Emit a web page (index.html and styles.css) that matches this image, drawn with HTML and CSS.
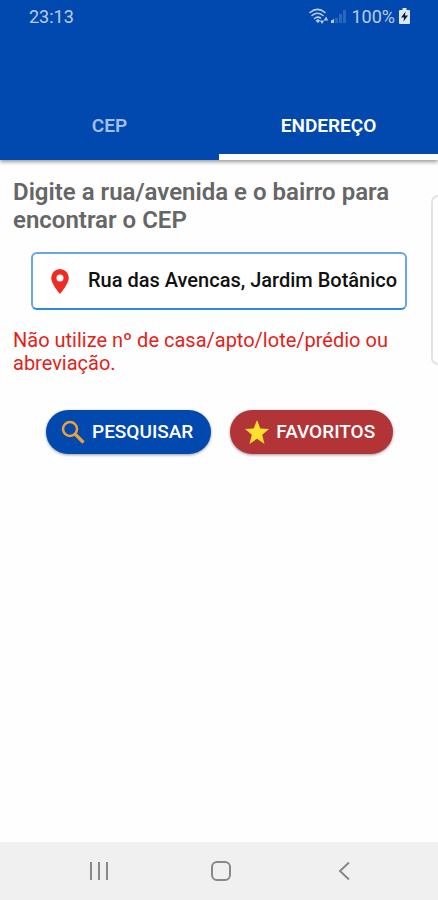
FILE: index.html
```html
<!DOCTYPE html>
<html lang="pt-BR">
<head>
<meta charset="utf-8">
<meta name="viewport" content="width=device-width, initial-scale=1">
<title>Buscar CEP</title>
<link rel="stylesheet" href="styles.css">
</head>
<body>
<header class="app-bar">
  <div class="status">
    <span>23:13</span>
    <span class="status-right">
      <svg class="wifi" viewBox="0 0 20 16" aria-hidden="true">
        <g fill="none" stroke="currentColor" stroke-width="1.6" stroke-linecap="round">
          <path d="M1 4.500Q8.500-1.800 16 4.500"/><path d="M3 7.500Q8.500 3 14 7.500"/><path d="M5.500 10.500Q8.500 8 11.500 10"/>
        </g>
        <path d="M6.500 12.700L9 11L11.200 12.700L9 15Z M10.800 12.500h4.400l-2.200 3.500z M14.800 12.500l2.200-4l2.200 4z" fill="currentColor"/>
      </svg>
      <svg class="signal" viewBox="0 0 15 14" aria-hidden="true">
        <path d="M0 11.500L3 10v4H0z" fill="#b9cdec"/>
        <path d="M4 9h3v5H4zM8 5h3v9H8zM12 1h3v13h-3z" fill="#2a66bb"/>
      </svg>
      <span class="percent">100%</span>
      <svg class="battery" viewBox="0 0 11 16" aria-hidden="true">
        <path d="M3.500 0h4v2H10a1 1 0 0 1 1 1v12a1 1 0 0 1-1 1H1a1 1 0 0 1-1-1V3a1 1 0 0 1 1-1h2.500z" fill="#dce7f6"/>
        <path d="M6.500 3.500L2 9.500h3L4.500 13.500L9 7.500H6z" fill="#0c2038"/>
      </svg>
    </span>
  </div>
  <nav class="tabs">
    <a class="tab" href="#cep">CEP</a>
    <a class="tab active" href="#endereco" aria-current="page">ENDEREÇO</a>
  </nav>
</header>
<main class="pager">
  <form class="search">
    <label class="title" for="address">Digite a rua/avenida e o bairro para encontrar o CEP</label>
    <div class="field">
      <svg class="pin" viewBox="0 0 18 25" aria-hidden="true">
        <path fill-rule="evenodd" d="M9 0a8.800 8.800 0 0 0-8.800 8.800C.2 15 9 25 9 25s8.800-10 8.800-16.200A8.800 8.800 0 0 0 9 0zm0 5.500a3.500 3.500 0 1 1 0 7 3.500 3.500 0 0 1 0-7z" fill="#ee2c24"/>
      </svg>
      <input id="address" type="text" value="Rua das Avencas, Jardim Botânico">
    </div>
    <p class="hint">Não utilize nº de casa/apto/lote/prédio ou abreviação.</p>
    <div class="actions">
      <button class="btn primary" type="submit">
        <svg viewBox="0 0 24 24" aria-hidden="true"><g fill="none" stroke="#e9a13b"><circle cx="9" cy="9" r="7" stroke-width="2.500"/><path d="M14 14L22.500 22.500" stroke-width="3.200"/></g></svg>
        PESQUISAR
      </button>
      <button class="btn danger" type="button">
        <svg viewBox="0 0 24 24" aria-hidden="true"><path d="M12 0l3.300 8.500 8.700.5-6.800 5.700L19.500 24 12 18.700 4.500 24l2.300-9.300L0 9l8.700-.5z" fill="#ffe02f"/></svg>
        FAVORITOS
      </button>
    </div>
  </form>
  <div class="next-page"></div>
</main>
<footer class="nav-bar">
  <button type="button" aria-label="Recentes"><svg viewBox="0 0 20 20" aria-hidden="true"><path d="M2 1v18M10 1v18M18 1v18"/></svg></button>
  <button type="button" aria-label="Início"><svg viewBox="0 0 20 20" aria-hidden="true"><rect x="1" y="1" width="18" height="18" rx="5"/></svg></button>
  <button type="button" aria-label="Voltar"><svg viewBox="0 0 20 20" aria-hidden="true"><path d="M15 1.500L6 10l9 8.500"/></svg></button>
</footer>
</body>
</html>
```
FILE: styles.css
```css
* { box-sizing: border-box; }

body {
  margin: 0;
  min-height: 100vh;
  display: flex;
  flex-direction: column;
  background: #fefefe;
  font-family: Roboto, "Liberation Sans", sans-serif;
}

button { border: 0; font: inherit; cursor: pointer; }

.app-bar {
  background: #0149af;
  box-shadow: 0 2px 4px rgba(0, 0, 0, .4);
}

.status {
  display: flex;
  justify-content: space-between;
  align-items: center;
  height: 32px;
  padding: 0 28px 0 29px;
  color: #b9cdec;
  font-size: 18px;
}

.status-right { display: flex; align-items: center; }
.wifi { width: 20px; height: 16px; }
.signal { width: 15px; height: 14px; margin: 0 5px 0 2px; }
.battery { width: 11px; height: 16px; margin-left: 4px; }

.tabs {
  display: grid;
  grid-template-columns: 1fr 1fr;
  margin-top: 60px;
}

.tab {
  height: 68px;
  border-bottom: 6px solid transparent;
  color: #a3bfe8;
  font-size: 19px;
  font-weight: 600;
  line-height: 68px;
  text-align: center;
  text-decoration: none;
}

.tab.active { color: #fff; border-color: #fff; }

.pager {
  flex: 1;
  display: grid;
  grid-template-columns: 1fr 7px;
  align-items: start;
  overflow: hidden;
}

.search { padding: 18px 24px 0 13px; }

.title {
  display: block;
  margin-right: -12px;
  color: #666;
  font-size: 24px;
  font-weight: 600;
  line-height: 28px;
}

.field {
  display: flex;
  align-items: center;
  height: 58px;
  margin: 18px 0 0 18px;
  padding-left: 18px;
  border: 2px solid #6ea3ea;
  border-bottom-color: #2c8ae0;
  border-radius: 6px;
  background: #fff;
}

.pin { flex: none; width: 18px; height: 25px; }

.field input {
  flex: 1;
  min-width: 0;
  height: 100%;
  margin-left: 19px;
  padding: 0 0 2px;
  border: 0;
  outline: 0;
  background: none;
  color: #111;
  font: 500 20px Roboto, "Liberation Sans", sans-serif;
}

.hint {
  margin: 19px 0 0;
  color: #e32219;
  font-size: 20px;
  line-height: 23px;
}

.actions {
  display: flex;
  gap: 19px;
  margin: 35px 0 20px 33px;
}

.btn {
  display: flex;
  align-items: center;
  gap: 7px;
  height: 44px;
  padding: 0 18px 1px 15px;
  border-radius: 22px;
  color: #fff;
  font-size: 19px;
  font-weight: 500;
  white-space: nowrap;
  box-shadow: 0 1px 3px rgba(0, 0, 0, .4);
}

.btn svg { flex: none; width: 24px; height: 24px; }
.primary { background: #0149af; }
.danger { background: #b23437; }

.next-page {
  height: 170px;
  margin-top: 35px;
  border: 2px solid #e2e2e2;
  border-right: 0;
  border-radius: 8px 0 0 8px;
}

.nav-bar {
  display: grid;
  grid-template-columns: repeat(3, 1fr);
  height: 58px;
  padding: 0 33px 0 38px;
  background: #f0f0f0;
}

.nav-bar button {
  display: flex;
  align-items: center;
  justify-content: center;
  padding: 0;
  background: none;
}

.nav-bar svg {
  width: 20px;
  height: 20px;
  fill: none;
  stroke: #888;
  stroke-width: 2;
}
```
